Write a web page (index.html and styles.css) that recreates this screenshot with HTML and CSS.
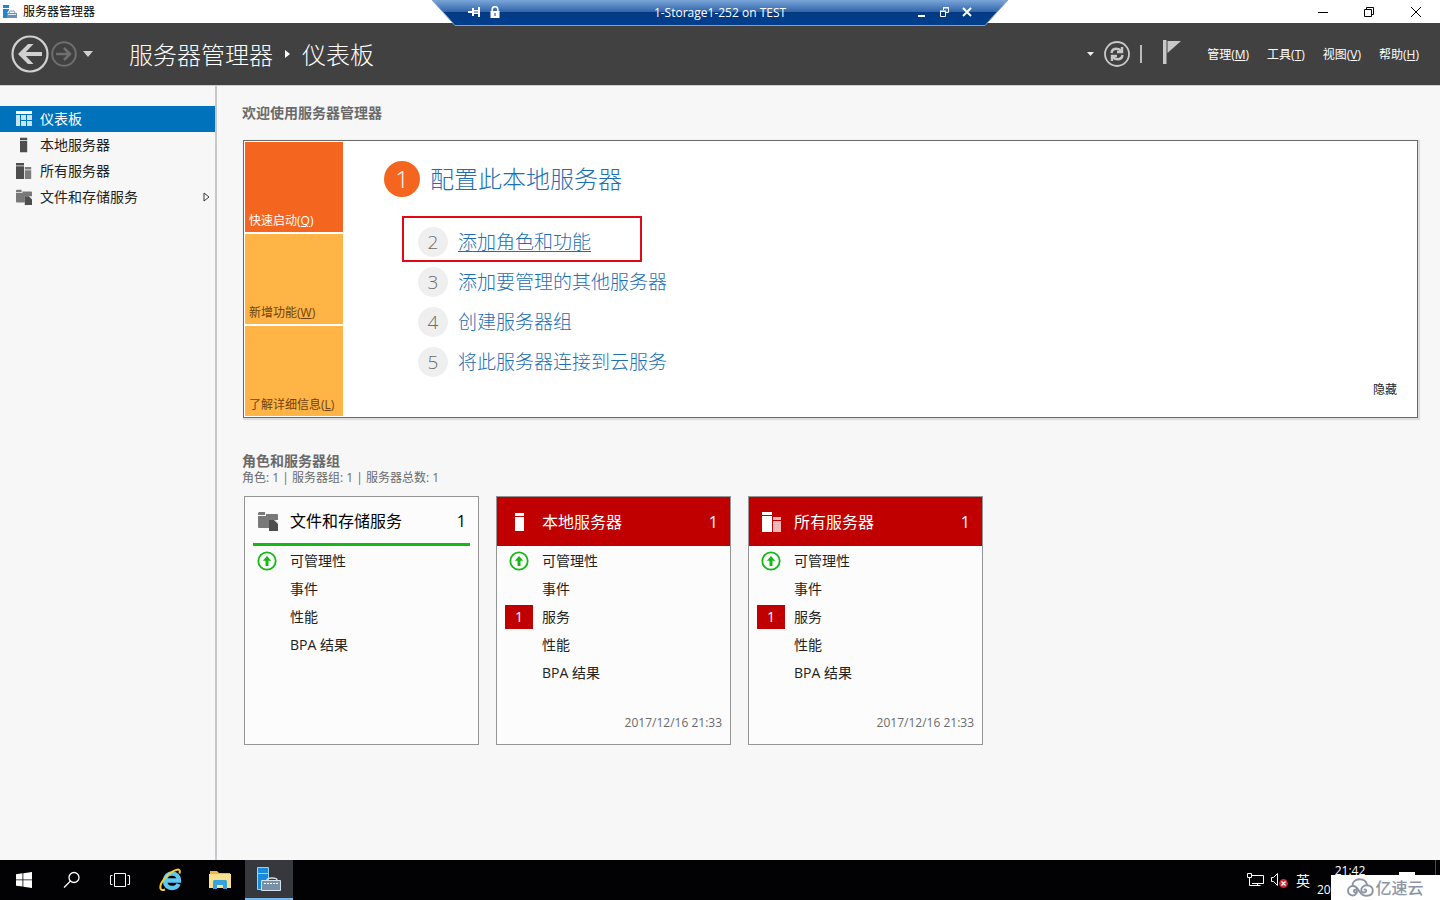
FILE: index.html
```html
<!DOCTYPE html>
<html lang="zh-CN">
<head>
<meta charset="utf-8">
<title>服务器管理器</title>
<link rel="stylesheet" href="styles.css">
</head>
<body>
<svg class="defs" width="0" height="0" aria-hidden="true">
  <symbol id="i-server" viewBox="0 0 20 20"><path d="M5 1h9v3H5zM5 5h9v14H5z"/></symbol>
  <symbol id="i-servers" viewBox="0 0 20 20"><path d="M0 0h10v3H0zM0 4h10v16H0z"/><path opacity=".72" d="M11 5h8v3h-8zM11 9h8v11h-8z"/></symbol>
  <symbol id="i-files" viewBox="0 0 20 20"><path opacity=".75" d="M0 2l1-1h6v3H0zM8 3h11q1 0 1 1v5h-9v8H1q-1 0-1-1V5h8z"/><path d="M11 9h6l3 3v8h-9z"/><path fill="#fff" d="M16 9l4 4v-1l-3-3z"/></symbol>
  <symbol id="i-up" viewBox="0 0 20 20"><circle cx="10" cy="10" r="8.700" fill="none" stroke="#16b816" stroke-width="1.800"/><path fill="#16b816" d="M10 5l4.200 4.800h-2.700V15h-3V9.800H5.800z"/></symbol>
</svg>

<div class="titlebar">
  <svg class="app-icon" viewBox="0 0 14 14"><path fill="#1f86d0" d="M0 0h6v3H0zM0 4h6v1L4 8v5H0z"/><path fill="#6d91b3" d="M4 8h10v5H4z"/><path fill="none" stroke="#6d91b3" d="M6 8l1-2h4l1 2"/><path fill="#dce9f5" d="M5 9h8v1H5z"/></svg>
  <span class="app-name">服务器管理器</span>
  <div class="win-controls">
    <button aria-label="最小化"><svg viewBox="0 0 12 12"><path d="M1 6.500h10"/></svg></button>
    <button aria-label="还原"><svg viewBox="0 0 12 12"><path d="M1.500 3.500h7v7h-7zM3.500 3.500v-2h7v7h-2"/></svg></button>
    <button aria-label="关闭"><svg viewBox="0 0 12 12"><path d="M1 1l10 10M11 1L1 11"/></svg></button>
  </div>
</div>

<div class="rdp">
  <svg class="rdp-shape" viewBox="0 0 576 26" preserveAspectRatio="none">
    <defs><linearGradient id="rg" x1="0" y1="0" x2="0" y2="1"><stop offset="0" stop-color="#7aa5d8"/><stop offset=".46" stop-color="#3467aa"/><stop offset=".48" stop-color="#043a82"/><stop offset="1" stop-color="#003f8e"/></linearGradient></defs>
    <path fill="url(#rg)" d="M0 0h576l-23 25H23z"/><path fill="none" stroke="#7f9fc9" d="M0 0l23 25.500h530L576 0"/>
  </svg>
  <div class="rdp-side">
    <button aria-label="固定"><svg viewBox="0 0 12 12"><path fill="#fff" d="M0 5h4V2h2v2h4V1h2v10h-2V8H6v2H4V7H0z"/><path fill="#2b5fa5" d="M6 5.500h4v1H6z"/></svg></button>
    <svg class="rdp-lock" viewBox="0 0 10 12"><path fill="none" stroke="#fff" stroke-width="1.500" d="M2.200 6V3.500a2.800 2.800 0 0 1 5.600 0V6"/><path fill="#fff" d="M.5 5h9v7h-9z"/><path fill="#043a82" d="M4.500 7h1v3h-1z"/></svg>
  </div>
  <span class="rdp-title">1-Storage1-252 on TEST</span>
  <div class="rdp-side end">
    <button aria-label="最小化连接"><svg viewBox="0 0 12 12"><path fill="#fff" d="M3 9h7v2H3z"/></svg></button>
    <button aria-label="还原连接"><svg viewBox="0 0 12 12"><path fill="none" stroke="#fff" d="M2.500 5.500h5v5h-5zM2 5h6M5.500 4V1.500h5v5H8M5 2h6"/></svg></button>
    <button aria-label="断开连接"><svg viewBox="0 0 12 12"><path stroke="#fff" stroke-width="2" d="M2 2l8 8M10 2l-8 8"/></svg></button>
  </div>
</div>

<header class="header">
  <button class="back" aria-label="后退"><svg viewBox="0 0 38 38"><circle cx="19" cy="19" r="17.500" fill="none" stroke="#d0d0d0" stroke-width="2.200"/><path fill="none" stroke="#d0d0d0" stroke-width="4" d="M31 19H10"/><path fill="#d0d0d0" d="M17 9h5.500L13 19l9.500 10H17L7 19z"/></svg></button>
  <button class="forward" aria-label="前进"><svg viewBox="0 0 26 26"><circle cx="13" cy="13" r="11.800" fill="none" stroke="#6f6f6f" stroke-width="2"/><path fill="none" stroke="#6f6f6f" stroke-width="2.600" d="M5 13h14M13 7l6 6-6 6"/></svg></button>
  <button class="history" aria-label="历史记录"><svg viewBox="0 0 10 6"><path fill="#d0d0d0" d="M0 0h10L5 6z"/></svg></button>
  <h1 class="crumbs"><span>服务器管理器</span><svg viewBox="0 0 5 8"><path fill="#fff" d="M0 0l5 4-5 4z"/></svg><span>仪表板</span></h1>
  <button class="more" aria-label="刷新选项"><svg viewBox="0 0 7 4"><path fill="#eee" d="M0 0h7L3.500 4z"/></svg></button>
  <button class="refresh" aria-label="刷新"><svg viewBox="0 0 26 26"><circle cx="13" cy="13" r="12" fill="none" stroke="#c8c8c8" stroke-width="1.800"/><g fill="none" stroke="#c8c8c8" stroke-width="2.400"><path d="M7.500 12q.5-4.200 5-4.200 3 0 4.500 2.200M18.500 14q-.5 4.200-5 4.200-3 0-4.500-2.200"/><path d="M18 6v5h-5M8 20v-5h5"/></g></svg></button>
  <span class="divider"></span>
  <button class="flag" aria-label="通知"><svg viewBox="0 0 18 24"><path fill="#c8c8c8" d="M0 0h3.500v24H0zM4.500 1H18L4.500 13z"/></svg></button>
  <nav class="menu">
    <button>管理(<u>M</u>)</button><button>工具(<u>T</u>)</button><button>视图(<u>V</u>)</button><button>帮助(<u>H</u>)</button>
  </nav>
</header>

<div class="workspace">
  <nav class="sidebar">
    <a class="nav-item active" href="#dashboard"><svg viewBox="0 0 16 16"><path fill="#fff" d="M0 0h16v3H0z"/><path fill="#cbe2f4" d="M0 4h4v11H0zM5 4h5v5H5zM11 4h5v5h-5zM5 10h5v5H5zM11 10h5v5h-5z"/></svg><span>仪表板</span></a>
    <a class="nav-item" href="#local"><svg><use href="#i-server"/></svg><span>本地服务器</span></a>
    <a class="nav-item" href="#all"><svg><use href="#i-servers"/></svg><span>所有服务器</span></a>
    <a class="nav-item" href="#files"><svg><use href="#i-files"/></svg><span>文件和存储服务</span><svg class="expand" viewBox="0 0 7 10"><path fill="#fff" stroke="#333" d="M1 1l5 4-5 4z"/></svg></a>
  </nav>

  <main class="main">
    <h2 class="section-title">欢迎使用服务器管理器</h2>
    <section class="welcome">
      <div class="tabs">
        <button class="tab selected">快速启动(<u>Q</u>)</button>
        <button class="tab">新增功能(<u>W</u>)</button>
        <button class="tab">了解详细信息(<u>L</u>)</button>
      </div>
      <div class="quick">
        <a class="step primary" href="#local"><span class="num">1</span><span>配置此本地服务器</span></a>
        <ol class="steps">
          <li class="marked"><a class="step hover" href="#roles"><span class="num">2</span><span class="label">添加角色和功能</span></a></li>
          <li><a class="step" href="#add"><span class="num">3</span><span class="label">添加要管理的其他服务器</span></a></li>
          <li><a class="step" href="#group"><span class="num">4</span><span class="label">创建服务器组</span></a></li>
          <li><a class="step" href="#cloud"><span class="num">5</span><span class="label">将此服务器连接到云服务</span></a></li>
        </ol>
      </div>
      <button class="hide">隐藏</button>
    </section>

    <h2 class="section-title groups-title">角色和服务器组</h2>
    <p class="summary">角色: 1 | 服务器组: 1 | 服务器总数: 1</p>
    <div class="cards">
      <article class="card ok">
        <h3 class="card-head"><svg><use href="#i-files"/></svg><span>文件和存储服务</span><b>1</b></h3>
        <ul class="rows">
          <li><span class="state"><svg><use href="#i-up"/></svg></span><a href="#m1">可管理性</a></li>
          <li><span class="state"></span><a href="#e1">事件</a></li>
          <li><span class="state"></span><a href="#p1">性能</a></li>
          <li><span class="state"></span><a href="#b1">BPA 结果</a></li>
        </ul>
      </article>
      <article class="card alert">
        <h3 class="card-head"><svg><use href="#i-server"/></svg><span>本地服务器</span><b>1</b></h3>
        <ul class="rows">
          <li><span class="state"><svg><use href="#i-up"/></svg></span><a href="#m2">可管理性</a></li>
          <li><span class="state"></span><a href="#e2">事件</a></li>
          <li><span class="state badge">1</span><a href="#s2">服务</a></li>
          <li><span class="state"></span><a href="#p2">性能</a></li>
          <li><span class="state"></span><a href="#b2">BPA 结果</a></li>
        </ul>
        <time class="stamp">2017/12/16 21:33</time>
      </article>
      <article class="card alert">
        <h3 class="card-head"><svg><use href="#i-servers"/></svg><span>所有服务器</span><b>1</b></h3>
        <ul class="rows">
          <li><span class="state"><svg><use href="#i-up"/></svg></span><a href="#m3">可管理性</a></li>
          <li><span class="state"></span><a href="#e3">事件</a></li>
          <li><span class="state badge">1</span><a href="#s3">服务</a></li>
          <li><span class="state"></span><a href="#p3">性能</a></li>
          <li><span class="state"></span><a href="#b3">BPA 结果</a></li>
        </ul>
        <time class="stamp">2017/12/16 21:33</time>
      </article>
    </div>
  </main>
</div>

<footer class="taskbar">
  <button aria-label="开始"><svg width="16" height="16" viewBox="0 0 16 16"><path fill="#fff" d="M0 2.200l6.500-.9v6.200H0zM7.300 1.200L16 0v7.500H7.300zM0 8.300h6.500v6.300L0 13.700zM7.300 8.300H16V16l-8.700-1.300z"/></svg></button>
  <button aria-label="搜索"><svg width="18" height="18" viewBox="0 0 18 18"><g fill="none" stroke="#fff" stroke-width="1.300"><circle cx="11" cy="6.500" r="5"/><path d="M7.500 10L1 16.500"/></g></svg></button>
  <button aria-label="任务视图"><svg width="20" height="16" viewBox="0 0 20 16"><path fill="none" stroke="#fff" d="M4.500 1.500h11v13h-11zM2.500 3.500h-2v9h2M17.500 3.500h2v9h-2"/></svg></button>
  <div class="apps">
    <button aria-label="Internet Explorer"><svg width="24" height="24" viewBox="0 0 24 24"><path fill="none" stroke="#5ec8f2" stroke-width="4.400" d="M6 12.500h14c0-4-3-7-7-7s-7 3-7 7.500 3 7 7 7c3 0 5.500-1.500 6.500-4"/><path fill="none" stroke="#f5cf31" stroke-width="2" d="M20.500 5.500C21.500 2 20 .8 17 2 10 4 0 15 1.500 20.500c.5 2 2.500 2 4.500.8"/></svg></button>
    <button aria-label="文件资源管理器"><svg width="22" height="18" viewBox="0 0 22 18"><path fill="#e9b94e" d="M1 0h7l2 2h11v4H1z"/><path fill="#fbe08e" d="M0 3h22v14H0z"/><path fill="#35a3de" d="M4 10l1-1h12l1 1v8h-4v-4H8v4H4z"/></svg></button>
    <button class="running" aria-label="服务器管理器"><svg width="24" height="24" viewBox="0 0 24 24"><path fill="#188bdc" stroke="#9dd0f2" d="M.5.500h11v22H.5zM.5 6.500h11"/><path fill="none" stroke="#d5e0e8" stroke-width="1.400" d="M10 13q0-2 5-2t5 2"/><path fill="#7891a6" stroke="#d5e0e8" d="M4.500 13.500h19v10h-19z"/><path stroke="#fff" stroke-dasharray="2 1" d="M7 16.500h14"/></svg></button>
  </div>
  <div class="tray">
    <svg width="17" height="14" viewBox="0 0 17 14"><g fill="none" stroke="#fff"><path d="M5 2.500h11.500v8H5M.5.500h4v4h-4zM2.500 4.500v8h11M10.500 10.500v2"/></g></svg>
    <svg width="17" height="15" viewBox="0 0 17 15"><path fill="none" stroke="#fff" d="M.5 4.500h2l4-4v12l-4-4h-2z"/><circle cx="12.500" cy="10.500" r="4.400" fill="#d92b35"/><path stroke="#fff" stroke-width="1.300" d="M10.500 8.500l4 4M14.500 8.500l-4 4"/></svg>
    <span class="ime">英</span>
    <div class="clock"><span class="time">21:42</span><span>20</span></div>
    <svg class="notice" width="16" height="16" viewBox="0 0 16 16"><path fill="#fff" d="M0 0h16v12H0z"/></svg>
    <span class="peek"></span>
  </div>
  <div class="watermark">
    <svg width="27" height="20" viewBox="0 0 27 20"><g fill="none" stroke="#8d95a5" stroke-width="1.900" stroke-linecap="round"><path d="M5.500 8C5 4 8.500 1.200 12.500 1.200c4 0 7 2 7.700 6"/><path d="M8 14.500a1.500 1.500 0 1 1 1.500-2.500c1 1.800-.3 5.500-3.500 5.500-3 0-5-2-5-4.700S3.200 8 6 8c4 0 5 3.500 7 6.300 1.500 2.200 3 3.500 6.500 3.500 4 0 6.300-2 6.300-5 0-3.300-2.500-5.500-6-5.500s-5.800 2.500-5.500 5c.2 2 3.700 3 4.700 1.200.7-1.500-.5-2.500-1.500-2"/></g></svg>
    <span>亿速云</span>
  </div>
</footer>
</body>
</html>
```
FILE: styles.css
```css
*, *::before { box-sizing: border-box; }

body {
  margin: 0;
  min-height: 100vh;
  display: flex;
  flex-direction: column;
  position: relative;
  background: #f7f7f7;
  color: #222;
  font: 14px/20px "Open Sans", "Noto Sans CJK SC", sans-serif;
}

button {
  padding: 0;
  border: 0;
  background: none;
  color: inherit;
  font: inherit;
  display: flex;
  align-items: center;
  justify-content: center;
}

a { color: inherit; text-decoration: none; }
h1, h2, h3, p, ul, ol { margin: 0; padding: 0; list-style: none; }
svg { display: block; flex: none; }
u { text-underline-offset: 1px; }
.defs { position: absolute; }

/* Window title */
.titlebar {
  height: 23px;
  display: flex;
  align-items: center;
  padding-left: 3px;
  background: #fff;
  color: #000;
  font-size: 12px;
}
.app-icon { width: 14px; height: 14px; margin-right: 6px; }
.win-controls { display: flex; margin-left: auto; }
.win-controls button { width: 46px; height: 20px; }
.win-controls button:last-child { width: 48px; }
.win-controls svg { width: 12px; height: 12px; fill: none; stroke: #000; }

/* Remote session bar */
.rdp {
  position: absolute;
  top: 0;
  left: 50%;
  width: 576px;
  height: 26px;
  margin-left: -288px;
  padding: 0 30px 2px;
  display: flex;
  align-items: center;
  color: #fff;
  font-size: 12px;
}
.rdp-shape { position: absolute; left: 0; top: 0; width: 100%; height: 100%; }
.rdp-side { position: relative; flex: 1; display: flex; align-items: center; }
.rdp-side.end { justify-content: flex-end; }
.rdp button { width: 23px; height: 20px; }
.rdp button svg { width: 12px; height: 12px; }
.rdp-lock { width: 10px; height: 12px; margin-left: 5px; }
.rdp-title { position: relative; padding-top: 1px; font-size: 12px; }

/* Header */
.header {
  height: 62px;
  display: flex;
  align-items: center;
  padding: 0 21px 0 11px;
  background: #414141;
  color: #fff;
}
.back svg { width: 38px; height: 38px; }
.forward { margin-left: 2px; }
.forward svg, .refresh svg { width: 26px; height: 26px; }
.history { margin-left: 6px; }
.history svg { width: 10px; height: 6px; }
.crumbs {
  display: flex;
  align-items: center;
  gap: 12px;
  margin: 0 auto 0 36px;
  font-size: 24px;
  font-weight: 300;
  line-height: 32px;
}
.crumbs span { padding-top: 2px; }
.crumbs svg { width: 5px; height: 8px; }
.more svg { width: 7px; height: 4px; }
.refresh { margin-left: 10px; }
.divider { width: 2px; height: 18px; margin: 0 21px 0 10px; background: #bbb; }
.flag svg { width: 18px; height: 24px; }
.flag { padding-bottom: 4px; }
.menu { display: flex; gap: 18px; margin-left: 26px; padding-top: 2px; font-size: 12px; }

/* Body */
.workspace { flex: 1; display: flex; border-top: 1px solid #d0d0d0; }
.sidebar { width: 217px; flex: none; padding-top: 20px; border-right: 2px solid #c8c8cb; }
.nav-item { height: 26px; display: flex; align-items: center; gap: 8px; padding: 0 5px 0 16px; }
.nav-item svg { width: 16px; height: 16px; fill: #4e4e4e; }
.nav-item .expand { width: 7px; height: 10px; margin-left: auto; }
.nav-item.active { background: #0072bc; color: #fff; }

.main { flex: 1; min-width: 0; padding: 17px 22px 20px 25px; }
.section-title { font-size: 14px; line-height: 20px; font-weight: 700; color: #6a6a6a; }

.welcome {
  display: flex;
  margin: 17px 0 0 1px;
  padding: 1px;
  background: #fff;
  border: 1px solid #6c6c6c;
  box-shadow: 1px 1px 1px 1px #ddd;
}
.tabs { width: 98px; display: grid; gap: 2px; }
.tab {
  height: 90px;
  padding: 0 0 1px 4px;
  align-items: flex-end;
  justify-content: flex-start;
  background: #ffb445;
  color: #6d420d;
  font-size: 12px;
  white-space: nowrap;
}
.tab.selected { background: #f4661f; color: #fff; }

.quick { flex: 1; padding: 19px 0 0 41px; }
.step { display: inline-flex; align-items: center; gap: 10px; color: #1c6fb5; font-weight: 300; }
.num {
  width: 30px;
  height: 30px;
  border-radius: 50%;
  background: #efefef;
  color: #6b6b6b;
  text-align: center;
  font-size: 19px;
  line-height: 30px;
}
.primary { font-size: 24px; line-height: 36px; }
.primary .num { width: 36px; height: 36px; background: #f4661f; color: #fff; font-size: 24px; line-height: 36px; }
.steps { padding: 25px 0 0 34px; }
.steps li { height: 40px; display: flex; align-items: center; position: relative; }
.label { font-size: 19px; line-height: 28px; }
.hover .label { text-decoration: underline; text-decoration-thickness: 1px; text-underline-offset: 2px; }
.marked::before {
  content: "";
  position: absolute;
  left: -16px;
  top: -6px;
  width: 240px;
  height: 46px;
  border: 2px solid #e00914;
  pointer-events: none;
}
.hide { align-self: flex-end; margin: 0 19px 16px 0; font-size: 12px; }

.groups-title { margin-top: 34px; line-height: 18px; }
.summary { font-size: 12px; line-height: 16px; color: #6a6a6a; }
.cards { display: flex; flex-wrap: wrap; gap: 17px; margin: 10px 0 0 2px; }
.card {
  width: 235px;
  min-height: 249px;
  display: flex;
  flex-direction: column;
  background: #fcfcfc;
  border: 1px solid #959595;
}
.card-head {
  height: 49px;
  display: flex;
  align-items: center;
  padding: 0 12px;
  font-size: 16px;
  font-weight: 400;
}
.card-head svg { width: 22px; height: 20px; margin-right: 11px; }
.card-head b { margin-left: auto; font-weight: 400; }
.ok .card-head { margin: 0 8px; padding: 2px 4px 0; border-bottom: 3px solid #16b816; color: #000; }
.ok .card-head svg { fill: #4e4e4e; }
.alert .card-head { background: #c00000; color: #fff; }
.alert .card-head svg { fill: #fff; }
.rows { padding: 1px 8px 0; }
.rows li { height: 28px; display: flex; align-items: center; gap: 9px; }
.state { width: 28px; height: 24px; display: flex; align-items: center; justify-content: center; }
.state svg { width: 20px; height: 20px; }
.badge { background: #c00000; color: #fff; }
.stamp { margin: auto 8px 11px auto; font-size: 12px; color: #6a6a6a; }

/* Taskbar */
.taskbar { height: 40px; display: flex; position: relative; background: #020205; color: #fff; }
.taskbar button { width: 48px; height: 40px; }
.apps { display: flex; gap: 1px; margin-left: 3px; }
.taskbar .running { background: #37383d; border-bottom: 2px solid #76b9ed; }
.tray { display: flex; align-items: center; margin-left: auto; font-size: 12px; }
.tray svg + svg { margin-left: 7px; }
.ime { margin: 0 7px 0 8px; padding-top: 1px; font-size: 14px; }
.clock { width: 66px; display: flex; flex-direction: column; line-height: 19px; }
.time { text-align: center; }
.tray .notice { margin: 0 20px 12px 16px; align-self: flex-end; }
.peek { width: 5px; align-self: stretch; border-left: 1px solid #4a4a50; }
.watermark {
  position: absolute;
  right: 0;
  bottom: 0;
  width: 109px;
  height: 25px;
  display: flex;
  align-items: center;
  justify-content: center;
  gap: 1px;
  background: #fff;
  color: #8d95a5;
  font-size: 16px;
  font-weight: 500;
}
```
